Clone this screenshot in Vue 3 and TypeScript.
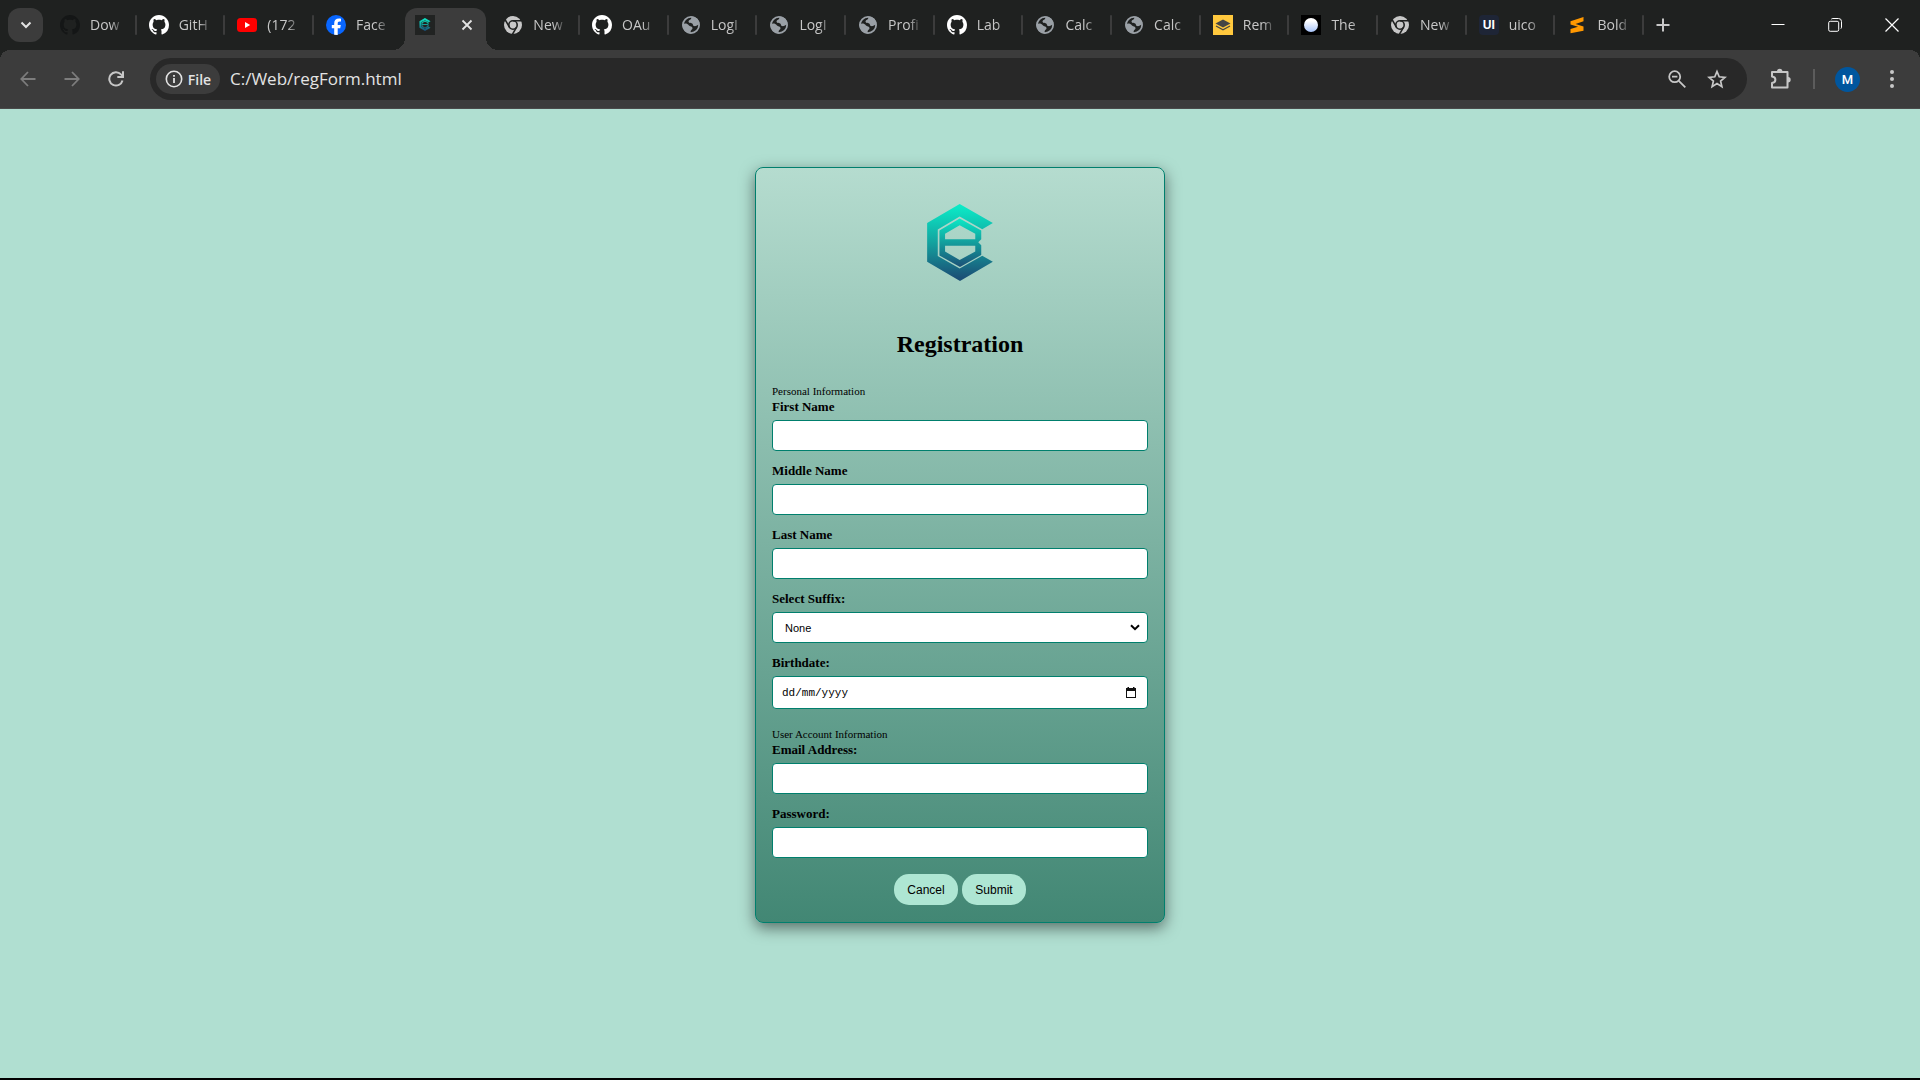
<script setup lang="ts">
import { ref } from 'vue'

interface Tab {
  icon: string
  title: string
  active?: boolean
}

const tabs: Tab[] = [
  { icon: 'github-dark', title: 'Dow' },
  { icon: 'github', title: 'GitH' },
  { icon: 'youtube', title: '(172' },
  { icon: 'facebook', title: 'Face' },
  { icon: 'brand', title: '', active: true },
  { icon: 'chrome', title: 'New' },
  { icon: 'github', title: 'OAu' },
  { icon: 'globe', title: 'LogI' },
  { icon: 'globe', title: 'LogI' },
  { icon: 'globe', title: 'Profi' },
  { icon: 'github', title: 'Lab' },
  { icon: 'globe', title: 'Calc' },
  { icon: 'globe', title: 'Calc' },
  { icon: 'layers', title: 'Rem' },
  { icon: 'moon', title: 'The' },
  { icon: 'chrome', title: 'New' },
  { icon: 'ui', title: 'uico' },
  { icon: 'sublime', title: 'Bold' },
]

const names = [
  { id: 'first', label: 'First Name' },
  { id: 'middle', label: 'Middle Name' },
  { id: 'last', label: 'Last Name' },
]

const suffix = ref('None')
const address = ref('C:/Web/regForm.html')
</script>

<template>
  <svg class="sprite" aria-hidden="true">
    <defs>
      <linearGradient id="brand-fill" gradientUnits="userSpaceOnUse" x1="0" y1="170" x2="0" y2="385">
        <stop offset="0" stop-color="#0ce9c6" />
        <stop offset="0.5" stop-color="#13a39f" />
        <stop offset="1" stop-color="#1b4f76" />
      </linearGradient>
      <linearGradient id="brand-core" gradientUnits="userSpaceOnUse" x1="0" y1="206" x2="0" y2="352">
        <stop offset="0" stop-color="#0ce9c6" />
        <stop offset="0.5" stop-color="#139d9c" />
        <stop offset="1" stop-color="#1b4f76" />
      </linearGradient>
      <linearGradient id="moon-fill" x1="0" y1="0" x2="0" y2="1">
        <stop offset="0.2" stop-color="#fff" />
        <stop offset="1" stop-color="#a9c5fa" />
      </linearGradient>
    </defs>
    <symbol id="mark" viewBox="563 162 198 232">
      <path fill="url(#brand-fill)" d="M661 162L761 219L729 238L661 200L595 239V319L661 356L729 318L761 336L662 394L563 336V219Z" />
      <path fill="url(#brand-core)" fill-rule="evenodd" d="M661 206L726 242V268L717 277L726 286V316L662 352L600 317V242ZM661 226L617 252V268H708V252ZM617 288V305L661 331L708 305V288Z" />
    </symbol>
    <symbol id="octocat" viewBox="0 0 16 16">
      <path d="M8 0C3.58 0 0 3.58 0 8c0 3.54 2.29 6.53 5.47 7.59.4.07.55-.17.55-.38 0-.19-.01-.82-.01-1.49-2.01.37-2.53-.49-2.69-.94-.09-.23-.48-.94-.82-1.13-.28-.15-.68-.52-.01-.53.63-.01 1.08.58 1.23.82.72 1.21 1.87.87 2.33.66.07-.52.28-.87.51-1.07-1.78-.2-3.64-.89-3.64-3.95 0-.87.31-1.59.82-2.15-.08-.2-.36-1.02.08-2.12 0 0 .67-.21 2.2.82.64-.18 1.32-.27 2-.27s1.36.09 2 .27c1.53-1.04 2.2-.82 2.2-.82.44 1.1.16 1.92.08 2.12.51.56.82 1.27.82 2.15 0 3.07-1.87 3.75-3.65 3.95.29.25.54.73.54 1.48 0 1.07-.01 1.93-.01 2.2 0 .21.15.46.55.38A8.01 8.01 0 0 0 16 8c0-4.42-3.58-8-8-8Z" />
    </symbol>
    <symbol id="github" viewBox="0 0 20 20"><use href="#octocat" width="20" height="20" fill="#fff" /></symbol>
    <symbol id="github-dark" viewBox="0 0 20 20"><use href="#octocat" width="20" height="20" fill="#141616" /></symbol>
    <symbol id="youtube" viewBox="0 0 20 20">
      <rect y="3" width="20" height="14" rx="3.5" fill="#f00" />
      <path fill="#fff" d="M8 7l5.2 3L8 13z" />
    </symbol>
    <symbol id="facebook" viewBox="0 0 20 20">
      <circle cx="10" cy="10" r="10" fill="#0866ff" />
      <path fill="#fff" d="M8.2 19.8v-6.6H5.8V10h2.4V8.6c0-3.4 1.6-5 4.9-5 .6 0 1.4.1 1.9.2v2.8l-1.3-.1c-1.6 0-2 .7-2 2.2V10h3.1l-.6 3.2h-2.5v6.7z" />
    </symbol>
    <symbol id="brand" viewBox="0 0 20 20">
      <rect width="20" height="20" fill="#212322" />
      <use href="#mark" x="4" y="3" width="12" height="13" />
    </symbol>
    <symbol id="chrome" viewBox="0 0 20 20">
      <circle cx="10" cy="10" r="9" fill="#c7c7c7" />
      <circle cx="10" cy="10" r="4.2" fill="none" stroke="#1f2120" stroke-width="1.6" />
      <path stroke="#1f2120" stroke-width="1.6" fill="none" d="M10 5.8H18.5M6.4 12.1L2.1 4.7M13.6 12.1L9.4 19.4" />
    </symbol>
    <symbol id="globe" viewBox="0 0 20 20">
      <circle cx="10" cy="10" r="8.1" fill="none" stroke="#9aa0a6" stroke-width="1.8" />
      <path fill="#9aa0a6" d="M10.8 1.5C10 3.5 10.5 4 9 4.700c-1.300.6-2 1.800-1 2.800 1 .9 2.600.2 3.500 1.300.8 1.100.1 2 1.700 2.300 1.600.2 3.600-.8 5-2.300.5-3.500-3-7.500-7.400-7.300z" />
      <path fill="#9aa0a6" d="M1.5 9.2c1.8-.5 3.200-.9 4.700-.2 1.500.7 1.700 1.700 3 2.200 1.400.5 2.600.9 2.300 2.400-.2 1.300-1.700 1.300-1.900 2.900l.2 2C5 18.500 1.500 14.500 1.500 9.200z" />
    </symbol>
    <symbol id="layers" viewBox="0 0 20 20">
      <rect width="20" height="20" fill="#ffc83d" />
      <path fill="#454545" d="M10 4.500l7.500 4-7.500 4-7.500-4z" />
      <path fill="none" stroke="#454545" stroke-width="1.300" d="M3 11l7 3.700 7-3.700" />
    </symbol>
    <symbol id="moon" viewBox="0 0 20 20">
      <rect width="20" height="20" fill="#000" />
      <circle cx="10" cy="10" r="7" fill="url(#moon-fill)" />
    </symbol>
    <symbol id="sublime" viewBox="0 0 20 20">
      <path fill="#ff9800" d="M3.500 6.200L16.500 2v4.300L8.500 8.900l8 2.500v4.300L3.500 18.300v-4.200l7.500-2.400-7.500-2.200z" />
    </symbol>
  </svg>

  <div class="window">
    <header class="strip">
      <button class="search-tabs" aria-label="Search tabs">
        <svg width="12" height="8" viewBox="0 0 12 8"><path d="M1.500 1.500L6 6l4.500-4.500" fill="none" stroke="#e3e3e3" stroke-width="2" /></svg>
      </button>
      <nav class="tabs">
        <div v-for="(tab, i) in tabs" :key="i" class="tab" :class="{ active: tab.active, plain: tabs[i + 1]?.active }">
          <span v-if="tab.icon === 'ui'" class="favicon badge">UI</span>
          <svg v-else class="favicon"><use :href="'#' + tab.icon" /></svg>
          <span v-if="!tab.active" class="title">{{ tab.title }}</span>
          <button v-else class="close-tab" aria-label="Close tab">
            <svg width="12" height="12" viewBox="0 0 12 12"><path d="M1.500 1.500l9 9M10.500 1.500l-9 9" stroke="#e3e3e3" stroke-width="1.800" /></svg>
          </button>
        </div>
      </nav>
      <button class="new-tab" aria-label="New tab">
        <svg width="14" height="14" viewBox="0 0 14 14"><path d="M7 .5v13M.5 7h13" stroke="#c7c7c7" stroke-width="2" /></svg>
      </button>
      <div class="controls">
        <button aria-label="Minimize">
          <svg width="14" height="14" viewBox="0 0 14 14"><path d="M.5 6.500h13" stroke="#fff" /></svg>
        </button>
        <button aria-label="Restore">
          <svg width="14" height="14" viewBox="0 0 14 14" fill="none" stroke="#fff"><rect x=".7" y="3.300" width="10" height="10" rx="1.500" /><path d="M3.300 1.200q.5-.7 1.500-.7h5.700q3 0 3 3v5.700q0 1-.7 1.500" /></svg>
        </button>
        <button aria-label="Close">
          <svg width="14" height="14" viewBox="0 0 14 14"><path d="M.5.5l13 13M13.500.5l-13 13" stroke="#fff" stroke-width="1.200" /></svg>
        </button>
      </div>
    </header>

    <div class="toolbar">
      <button class="tool" aria-label="Back">
        <svg width="16" height="16" viewBox="0 0 16 16" fill="none" stroke="#7d7d7d" stroke-width="1.800"><path d="M15.500 8H1.500M8 1L1.300 8 8 15" /></svg>
      </button>
      <button class="tool" aria-label="Forward">
        <svg width="16" height="16" viewBox="0 0 16 16" fill="none" stroke="#7d7d7d" stroke-width="1.800"><path d="M.5 8h14M8 1l6.700 7L8 15" /></svg>
      </button>
      <button class="tool" aria-label="Reload">
        <svg width="16" height="16" viewBox="0 0 16 16" fill="none" stroke="#c7c7c7" stroke-width="2"><path d="M14.500 9.500A6.700 6.700 0 1 1 13 3.400L15 5.400" /><path d="M15 .3V6H9.300" /></svg>
      </button>
      <div class="omnibox">
        <button class="chip">
          <svg width="18" height="18" viewBox="0 0 18 18" fill="none" stroke="#e3e3e3" stroke-width="1.600"><circle cx="9" cy="9" r="7.700" /><path d="M9 8v5M9 5v1.700" stroke-width="1.800" /></svg>
          File
        </button>
        <input v-model="address" class="address" aria-label="Address" />
        <button class="tool" aria-label="Zoom">
          <svg width="18" height="18" viewBox="0 0 18 18" fill="none" stroke="#c7c7c7" stroke-width="1.800"><circle cx="6.700" cy="6.700" r="5.500" /><path d="M10.800 10.800l6.500 6.500M4 6.700h5.400" /></svg>
        </button>
        <button class="tool" aria-label="Bookmark">
          <svg width="20" height="20" viewBox="0 0 20 20" fill="none" stroke="#c7c7c7" stroke-width="1.700"><path d="M10 2.500l2.200 5.300 5.700.5-4.300 3.700 1.300 5.600L10 14.600l-4.900 3L6.400 12 2.100 8.300l5.700-.5z" /></svg>
        </button>
      </div>
      <button class="tool extensions" aria-label="Extensions">
        <svg width="22" height="22" viewBox="0 0 22 22"><path fill="none" stroke="#c7c7c7" stroke-width="2" stroke-linejoin="round" d="M2 4h15.500v15.500H2v-4.500c4.500-.5 4.500-6 0-6.500z" /><path fill="#c7c7c7" d="M7 3.500a2.700 2.700 0 0 1 5.400 0zM18 9a2.700 2.700 0 0 1 0 5.400z" /></svg>
      </button>
      <span class="rule"></span>
      <button class="avatar" aria-label="Profile">M</button>
      <button class="tool" aria-label="Menu">
        <svg width="4" height="18" viewBox="0 0 4 18" fill="#c7c7c7"><circle cx="2" cy="2" r="2" /><circle cx="2" cy="9" r="2" /><circle cx="2" cy="16" r="2" /></svg>
      </button>
    </div>

    <main class="page">
      <form class="card" @submit.prevent>
        <svg class="logo" role="img" aria-label="Logo"><use href="#mark" /></svg>
        <h1>Registration</h1>

        <p class="section">Personal Information</p>
        <div v-for="n in names" :key="n.id" class="field">
          <label :for="n.id">{{ n.label }}</label>
          <input :id="n.id" type="text" />
        </div>
        <div class="field">
          <label for="suffix">Select Suffix:</label>
          <div class="picker">
            <select id="suffix" v-model="suffix">
              <option>None</option>
              <option>Jr.</option>
              <option>Sr.</option>
              <option>III</option>
            </select>
            <svg class="chevron" width="10" height="7" viewBox="0 0 10 7"><path d="M1 1.200l4 4 4-4" fill="none" stroke="#000" stroke-width="2" /></svg>
          </div>
        </div>
        <div class="field date">
          <label for="birthdate">Birthdate:</label>
          <div class="picker">
            <input id="birthdate" type="text" placeholder="dd/mm/yyyy" />
            <button type="button" aria-label="Show date picker">
              <svg width="10" height="11" viewBox="0 0 10 11"><path fill="#111" fill-rule="evenodd" d="M0 1h1.500V0H3v1h4V0h1.500v1H10v10H0zM1 4v6h8V4z" /></svg>
            </button>
          </div>
        </div>

        <p class="section">User Account Information</p>
        <div class="field">
          <label for="email">Email Address:</label>
          <input id="email" type="email" />
        </div>
        <div class="field">
          <label for="password">Password:</label>
          <input id="password" type="password" />
        </div>

        <div class="actions">
          <button type="reset">Cancel</button>
          <button type="submit">Submit</button>
        </div>
      </form>
    </main>
  </div>
</template>

<style>
body {
  margin: 0;
}
</style>

<style scoped>
.sprite {
  position: absolute;
  width: 0;
  height: 0;
}

button {
  flex: none;
  padding: 0;
  border: 0;
  background: none;
  display: flex;
  align-items: center;
  justify-content: center;
}

.window {
  display: flex;
  flex-direction: column;
  box-sizing: border-box;
  min-height: 100vh;
  border-bottom: 2px solid #000;
  background: #b0dfd1;
}

/* tab strip */
.strip {
  display: flex;
  align-items: center;
  height: 50px;
  background: #1f2120;
  font-family: 'Segoe UI', 'Open Sans', 'Noto Sans', sans-serif;
}

.search-tabs {
  width: 35px;
  height: 34px;
  margin: 0 4px 0 8px;
  border-radius: 12px;
  background: #3c3c3c;
}

.tabs {
  display: flex;
  flex: 1;
  align-self: stretch;
  min-width: 0;
}

.tab {
  position: relative;
  display: flex;
  flex: 1 1 0;
  align-items: center;
  gap: 10px;
  min-width: 0;
  box-sizing: border-box;
  padding: 0 12px 0 13px;
}

.tab::after {
  content: '';
  position: absolute;
  right: -1px;
  top: 15px;
  width: 2px;
  height: 20px;
  border-radius: 1px;
  background: #3c3c3c;
}

.tab.plain::after {
  display: none;
}

.tab.active {
  margin-top: 8px;
  padding-bottom: 8px;
  justify-content: space-between;
}

.tab.active::before {
  content: '';
  position: absolute;
  inset: 0 4px 0 3px;
  border-radius: 12px 12px 0 0;
  background: #3c3c3c;
}

.tab.active::after {
  inset: auto -8px 0 -9px;
  width: auto;
  height: 12px;
  border-radius: 0;
  background:
    radial-gradient(circle at 0 0, transparent 12px, #3c3c3c 12px) left / 12px 12px no-repeat,
    radial-gradient(circle at 100% 0, transparent 12px, #3c3c3c 12px) right / 12px 12px no-repeat;
}

.favicon {
  flex: none;
  width: 20px;
  height: 20px;
  position: relative;
  z-index: 1;
}

.badge {
  border-radius: 4px;
  background: #1e2536;
  color: #fff;
  font: 700 12px/20px Inter, sans-serif;
  text-align: center;
}

.title {
  flex: 1;
  min-width: 0;
  white-space: nowrap;
  font-size: 14px;
  line-height: 20px;
  color: #c7c7c7;
  mask-image: linear-gradient(to right, #000 60%, transparent);
}

.close-tab {
  position: relative;
  z-index: 1;
  width: 12px;
  margin-right: 5px;
}

.new-tab {
  width: 28px;
  height: 28px;
  margin-left: 6px;
}

.controls {
  display: flex;
  align-self: stretch;
  margin-left: 72px;
}

.controls button {
  width: 57px;
}

/* toolbar */
.toolbar {
  display: flex;
  align-items: center;
  box-sizing: border-box;
  height: 59px;
  padding: 0 18px;
  border-bottom: 1px solid #4a4a4a;
  background:
    radial-gradient(circle at 10px 10px, #3c3c3c 10px, #1f2120 10px) left top / 10px 10px no-repeat,
    radial-gradient(circle at 0 10px, #3c3c3c 10px, #1f2120 10px) right top / 10px 10px no-repeat,
    #3c3c3c;
  font-family: 'Segoe UI', 'Open Sans', 'Noto Sans', sans-serif;
}

.tool {
  width: 20px;
  height: 32px;
  margin-right: 24px;
}

.omnibox {
  display: flex;
  flex: 1;
  align-items: center;
  min-width: 0;
  box-sizing: border-box;
  height: 42px;
  margin-right: 23px;
  padding: 0 20px 0 6px;
  border-radius: 21px;
  background: #282828;
}

.chip {
  gap: 5px;
  width: 64px;
  height: 30px;
  border-radius: 15px;
  background: #3c3c3c;
  color: #e3e3e3;
  font-family: inherit;
  font-size: 14px;
  font-weight: 600;
}

.address {
  flex: 1;
  min-width: 0;
  margin: 0 10px;
  padding: 0;
  border: 0;
  outline: 0;
  background: none;
  color: #e3e3e3;
  font-family: inherit;
  font-size: 17px;
  line-height: 24px;
}

.omnibox .tool {
  margin: 0 0 0 20px;
}

.extensions {
  width: 22px;
  margin-right: 21px;
}

.rule {
  width: 2px;
  height: 20px;
  margin-right: 20px;
  background: #5c5c5c;
}

.avatar {
  width: 25px;
  height: 25px;
  margin-right: 22px;
  border-radius: 50%;
  background: #00569e;
  color: #fff;
  font-family: Roboto, sans-serif;
  font-size: 13px;
  font-weight: 500;
}

.toolbar > .tool:last-child {
  margin-right: 0;
}

/* page */
.page {
  display: flex;
  flex: 1;
  align-items: flex-start;
  justify-content: center;
  padding: 58px 16px;
  font-family: 'Liberation Serif', 'Times New Roman', serif;
  color: #000;
}

.card {
  box-sizing: border-box;
  width: 410px;
  padding: 36px 16px 17px;
  border: 1px solid #007f6d;
  border-radius: 8px;
  background: linear-gradient(#b5dccf, #428774);
  box-shadow: 0 5px 15px rgba(0, 0, 0, 0.5);
}

.logo {
  display: block;
  width: 66px;
  height: 77px;
  margin: 0 auto 49px;
}

h1 {
  margin: 0 0 26px;
  font-size: 24px;
  line-height: 28px;
  text-align: center;
}

.section {
  margin: 0;
  font-size: 11px;
  line-height: 15px;
}

.field {
  display: flex;
  flex-direction: column;
  gap: 5px;
  margin-bottom: 12px;
}

.field label {
  font-size: 13px;
  font-weight: 700;
  line-height: 16px;
}

.field input,
.field select {
  display: block;
  box-sizing: border-box;
  width: 100%;
  height: 31px;
  margin: 0;
  padding: 0 7px;
  border: 1px solid #007f6d;
  border-radius: 4px;
  background-color: #fff;
  color: #000;
  font-family: 'Liberation Sans', Arial, sans-serif;
  font-size: 11px;
}

.field select {
  padding: 0 12px;
  appearance: none;
}

.chevron {
  position: absolute;
  top: 12px;
  right: 8px;
  pointer-events: none;
}

.field.date {
  margin-bottom: 18px;
}

.picker {
  position: relative;
}

.field .picker input {
  height: 33px;
  padding: 0 9px;
  font-family: 'Liberation Mono', 'Courier New', monospace;
}

.picker input::placeholder {
  color: #000;
}

.picker button {
  position: absolute;
  top: 0;
  right: 12px;
  height: 33px;
}

.actions {
  display: flex;
  justify-content: center;
  gap: 4px;
  margin-top: 16px;
}

.actions button {
  width: 64px;
  height: 31px;
  border-radius: 15px;
  background: #aee6d3;
  color: #000;
  font-family: 'Liberation Sans', Arial, sans-serif;
  font-size: 12px;
}
</style>
